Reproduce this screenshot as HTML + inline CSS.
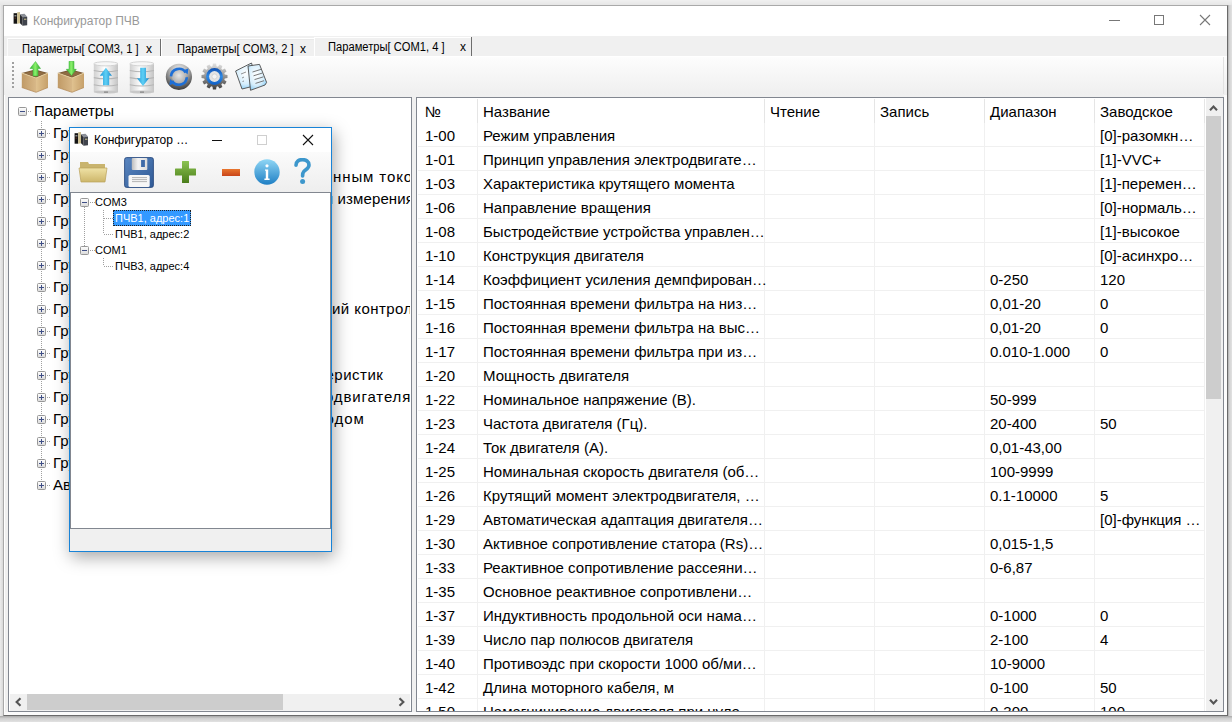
<!DOCTYPE html><html><head><meta charset="utf-8"><style>
*{box-sizing:border-box;margin:0;padding:0}
html,body{width:1232px;height:722px;overflow:hidden;background:#ececec;font-family:"Liberation Sans",sans-serif;color:#000}
.a{position:absolute}
.t{position:absolute;white-space:pre;line-height:1}
</style></head><body>
<div class="a" style="left:0px;top:0px;width:1232px;height:5px;background:linear-gradient(#f0f0f0,#e6e6e6)"></div>
<div class="a" style="left:3px;top:5px;width:1225px;height:711px;border:1px solid #a9a9a9;border-right-color:#6a6a6a;border-bottom-color:#6a6a6a;background:#f0f0f0"></div>
<div class="a" style="left:4px;top:57px;width:1px;height:658px;background:#fff"></div>
<div class="a" style="left:1224px;top:95px;width:3px;height:620px;background:#fcfcfc"></div>
<div class="a" style="left:4px;top:712px;width:1223px;height:3px;background:#fbfbfb"></div>
<div class="a" style="left:0px;top:716px;width:1232px;height:6px;background:linear-gradient(#a8a8a8,#cfcfcf 40%,#e2e2e2)"></div>
<div class="a" style="left:1228px;top:5px;width:4px;height:711px;background:linear-gradient(90deg,#b0b0b0,#d4d4d4 40%,#e2e2e2)"></div>
<div class="a" style="left:0px;top:5px;width:3px;height:711px;background:linear-gradient(90deg,#ececec,#d8d8d8)"></div>
<div class="a" style="left:4px;top:6px;width:1223px;height:30px;background:#fff"></div>
<svg class="a" style="left:13px;top:12px" width="15" height="14" viewBox="0 0 15 14">
<rect x=".6" y="1.2" width="3.6" height="10.5" fill="#141414"/><rect x="1.4" y="3" width="2" height="1.5" fill="#8a8a8a"/><rect x="1.6" y="5.6" width="1.2" height="1" fill="#7a3a2a"/>
<path d="M4.2 0.2 L7 0 L7 11.3 L4.2 11.7 Z" fill="#cdbf8f"/>
<path d="M7 2.2 L11.5 1.8 L14.2 4.8 L9.6 5.3 Z" fill="#8c9098"/>
<path d="M7 2.2 L9.6 5.3 L9.6 13.8 L7 11.3 Z" fill="#2c2e33"/>
<path d="M9.6 5.3 L14.2 4.8 L14.2 13.2 L9.6 13.8 Z" fill="#40444c"/><rect x="11" y="6.6" width="2.4" height="1.4" fill="#a9a27a"/></svg>
<div class="t" style="left:33px;top:15px;font-size:12px;color:#999;">Конфигуратор ПЧВ</div>
<div class="a" style="left:1109px;top:20px;width:11px;height:1px;background:#777"></div>
<div class="a" style="left:1154px;top:15px;width:10px;height:10px;border:1px solid #777"></div>
<svg class="a" style="left:1199px;top:14px" width="12" height="12" viewBox="0 0 12 12"><path d="M1 1L11 11M11 1L1 11" stroke="#777" stroke-width="1.1"/></svg>
<div class="a" style="left:4px;top:36px;width:1223px;height:21px;background:#f0f0f0"></div>
<div class="a" style="left:7px;top:38px;width:153px;height:18px;background:#f0f0f0;border-top:1px solid #fff"></div>
<div class="a" style="left:7px;top:39px;width:153px;height:1px;background:#e9e9e9"></div>
<div class="a" style="left:7px;top:38px;width:1px;height:18px;background:#fbfbfb"></div>
<div class="a" style="left:160px;top:39px;width:1px;height:17px;background:#6d6d6d"></div>
<div class="a" style="left:161px;top:38px;width:1px;height:18px;background:#fff"></div>
<div class="a" style="left:162px;top:38px;width:152px;height:18px;background:#f0f0f0;border-top:1px solid #fff"></div>
<div class="a" style="left:162px;top:39px;width:152px;height:1px;background:#e9e9e9"></div>
<div class="a" style="left:315px;top:37px;width:156px;height:19px;background:#f0f0f0;border-top:1px solid #fff"></div>
<div class="a" style="left:314px;top:37px;width:1px;height:19px;background:#fff"></div>
<div class="a" style="left:471px;top:37px;width:1px;height:19px;background:#6d6d6d"></div>
<div class="t" style="left:22px;top:43px;font-size:12px;color:#000;transform:scaleX(.93);transform-origin:0 0">Параметры[ COM3, 1 ]</div>
<div class="t" style="left:146px;top:43px;font-size:12px;color:#000;">x</div>
<div class="t" style="left:177px;top:43px;font-size:12px;color:#000;transform:scaleX(.93);transform-origin:0 0">Параметры[ COM3, 2 ]</div>
<div class="t" style="left:300px;top:43px;font-size:12px;color:#000;">x</div>
<div class="t" style="left:328px;top:41px;font-size:12px;color:#000;transform:scaleX(.93);transform-origin:0 0">Параметры[ COM1, 4 ]</div>
<div class="t" style="left:460px;top:41px;font-size:12px;color:#000;">x</div>
<div class="a" style="left:4px;top:56px;width:1223px;height:39px;border-top:1px solid #ffffff;background:linear-gradient(#fdfdfd,#f6f6f6 50%,#efefef)"></div>
<div class="a" style="left:1223px;top:57px;width:1px;height:37px;background:#e2e2e2"></div>
<div class="a" style="left:12px;top:62px;width:2px;height:2px;background:#a0a0a0"></div>
<div class="a" style="left:12px;top:66px;width:2px;height:2px;background:#a0a0a0"></div>
<div class="a" style="left:12px;top:70px;width:2px;height:2px;background:#a0a0a0"></div>
<div class="a" style="left:12px;top:74px;width:2px;height:2px;background:#a0a0a0"></div>
<div class="a" style="left:12px;top:78px;width:2px;height:2px;background:#a0a0a0"></div>
<div class="a" style="left:12px;top:82px;width:2px;height:2px;background:#a0a0a0"></div>
<div class="a" style="left:12px;top:86px;width:2px;height:2px;background:#a0a0a0"></div>
<svg class="a" style="left:0px;top:0px" width="1" height="1" viewBox="0 0 1 1"><defs><linearGradient id="bxl" x1="0" x2="1"><stop offset="0" stop-color="#c09a66"/><stop offset="1" stop-color="#d8b888"/></linearGradient>
<linearGradient id="bxr" x1="0" x2="1"><stop offset="0" stop-color="#e0c290"/><stop offset="1" stop-color="#c6a06a"/></linearGradient>
<linearGradient id="grn" x1="0" x2="1"><stop offset="0" stop-color="#2fb52f"/><stop offset=".5" stop-color="#8af06a"/><stop offset="1" stop-color="#2aa52a"/></linearGradient>
<linearGradient id="dbg" x1="0" x2="1"><stop offset="0" stop-color="#d0d0d0"/><stop offset=".45" stop-color="#ffffff"/><stop offset="1" stop-color="#c4c4c4"/></linearGradient>
<linearGradient id="blu" x1="0" x2="1"><stop offset="0" stop-color="#1e96d8"/><stop offset=".5" stop-color="#5fd0f5"/><stop offset="1" stop-color="#1a88cc"/></linearGradient>
<linearGradient id="exg" x1="0" y1="0" x2="0" y2="1"><stop offset="0" stop-color="#ffffff"/><stop offset="1" stop-color="#d9d9d9"/></linearGradient>
<radialGradient id="sph" cx=".4" cy=".35" r=".7"><stop offset="0" stop-color="#e8e8e8"/><stop offset=".6" stop-color="#8a8a8a"/><stop offset="1" stop-color="#3a3a3a"/></radialGradient>
</defs></svg>
<svg class="a" style="left:21px;top:61px" width="28" height="32" viewBox="0 0 28 32"><path d="M0.8 12 L14 8.5 L27 12 L15 17 Z" fill="#7a5a36"/>
<path d="M3 12.3 L14 9.8 L25 12.3 L15 15.8 Z" fill="#8f6c44"/>
<path d="M0.8 12 L15 17 L15 31.3 L0.8 26.5 Z" fill="url(#bxl)"/>
<path d="M15 17 L27 12 L27 26.5 L15 31.3 Z" fill="url(#bxr)"/>
<path d="M0.8 12 L15 17 L27 12" stroke="#e6cf9f" stroke-width=".9" fill="none"/>
<path d="M0.8 26.5 L15 31.3 L27 26.5" stroke="#b08552" stroke-width=".7" fill="none"/><path d="M12 15 L12 7.5 L9 7.5 L14.5 0.5 L19.5 7.5 L17 7.5 L17 15 Z" fill="url(#grn)" stroke="#34b034" stroke-width=".5"/></svg>
<svg class="a" style="left:57px;top:61px" width="28" height="32" viewBox="0 0 28 32"><path d="M0.8 12 L14 8.5 L27 12 L15 17 Z" fill="#7a5a36"/>
<path d="M3 12.3 L14 9.8 L25 12.3 L15 15.8 Z" fill="#8f6c44"/>
<path d="M0.8 12 L15 17 L15 31.3 L0.8 26.5 Z" fill="url(#bxl)"/>
<path d="M15 17 L27 12 L27 26.5 L15 31.3 Z" fill="url(#bxr)"/>
<path d="M0.8 12 L15 17 L27 12" stroke="#e6cf9f" stroke-width=".9" fill="none"/>
<path d="M0.8 26.5 L15 31.3 L27 26.5" stroke="#b08552" stroke-width=".7" fill="none"/><path d="M12 0.3 L17 0.3 L17 8.3 L19.3 8.3 L14.5 14.6 L9.3 8.3 L12 8.3 Z" fill="url(#grn)" stroke="#34b034" stroke-width=".5"/></svg>
<svg class="a" style="left:93px;top:61px" width="26" height="33" viewBox="0 0 26 33"><rect x=".8" y="2.6" width="24.2" height="28.8" fill="url(#dbg)"/>
<ellipse cx="12.9" cy="31" rx="12.1" ry="1.6" fill="#c8c8c8"/>
<ellipse cx="12.9" cy="2.8" rx="12.1" ry="2.1" fill="#f7f7f7" stroke="#cfcfcf" stroke-width=".9"/>
<path d="M.8 9.5 Q12.9 12 25 9.5" stroke="#b5b5b5" stroke-width="1.1" fill="none"/>
<path d="M.8 16.6 Q12.9 19 25 16.6" stroke="#b5b5b5" stroke-width="1.1" fill="none"/>
<path d="M.8 23.8 Q12.9 26.2 25 23.8" stroke="#b5b5b5" stroke-width="1.1" fill="none"/>
<rect x="11" y="30.6" width="4" height="1" fill="#777"/><path d="M10 24.3 L10 14.8 L6.8 14.8 L12.9 6.8 L19 14.8 L16.2 14.8 L16.2 24.3 Z" fill="url(#blu)"/></svg>
<svg class="a" style="left:129px;top:61px" width="26" height="33" viewBox="0 0 26 33"><rect x=".8" y="2.6" width="24.2" height="28.8" fill="url(#dbg)"/>
<ellipse cx="12.9" cy="31" rx="12.1" ry="1.6" fill="#c8c8c8"/>
<ellipse cx="12.9" cy="2.8" rx="12.1" ry="2.1" fill="#f7f7f7" stroke="#cfcfcf" stroke-width=".9"/>
<path d="M.8 9.5 Q12.9 12 25 9.5" stroke="#b5b5b5" stroke-width="1.1" fill="none"/>
<path d="M.8 16.6 Q12.9 19 25 16.6" stroke="#b5b5b5" stroke-width="1.1" fill="none"/>
<path d="M.8 23.8 Q12.9 26.2 25 23.8" stroke="#b5b5b5" stroke-width="1.1" fill="none"/>
<rect x="11" y="30.6" width="4" height="1" fill="#777"/><path d="M11.2 6.8 L17 6.8 L17 17.3 L20 17.3 L14 25 L8 17.3 L11.2 17.3 Z" fill="url(#blu)"/></svg>
<svg class="a" style="left:165px;top:63px" width="28" height="28" viewBox="0 0 28 28"><defs><radialGradient id="sph2" cx=".5" cy=".25" r=".8"><stop offset="0" stop-color="#f4f4f4"/><stop offset=".45" stop-color="#a9a9a9"/><stop offset=".8" stop-color="#585858"/><stop offset="1" stop-color="#2e2e2e"/></radialGradient>
<radialGradient id="sphc" cx=".5" cy=".4" r=".6"><stop offset="0" stop-color="#e6e6e6"/><stop offset="1" stop-color="#a9a9a9"/></radialGradient></defs>
<circle cx="13.9" cy="13.8" r="13.1" fill="url(#sph2)"/>
<circle cx="13.9" cy="13.8" r="7" fill="url(#sphc)"/>
<path d="M6 13.4 A7.9 7.9 0 0 1 20.6 9.6" stroke="#1e6fd6" stroke-width="2.6" fill="none"/>
<path d="M18.2 7.3 L23.4 5.4 L22.6 11.6 Z" fill="#1e6fd6"/>
<path d="M21.8 14.2 A7.9 7.9 0 0 1 7.2 18" stroke="#1e6fd6" stroke-width="2.6" fill="none"/>
<path d="M9.6 20.3 L4.4 22.2 L5.2 16 Z" fill="#1e6fd6"/></svg>
<svg class="a" style="left:201px;top:63px" width="28" height="28" viewBox="0 0 28 28"><defs><linearGradient id="gg" x1="0" y1="0" x2="0" y2="1"><stop offset="0" stop-color="#e2e2e2"/><stop offset=".45" stop-color="#9a9a9a"/><stop offset="1" stop-color="#3e3e3e"/></linearGradient>
<linearGradient id="gr" x1="0" y1="0" x2="0" y2="1"><stop offset="0" stop-color="#0f4fb0"/><stop offset=".5" stop-color="#2f8ae6"/><stop offset="1" stop-color="#0f5ec4"/></linearGradient></defs>
<path d="M11.52 3.29 L11.90 0.50 L15.10 0.50 L15.48 3.29 L16.89 3.67 L18.62 1.44 L21.38 3.04 L20.32 5.65 L21.35 6.68 L23.96 5.62 L25.56 8.38 L23.33 10.11 L23.71 11.52 L26.50 11.90 L26.50 15.10 L23.71 15.48 L23.33 16.89 L25.56 18.62 L23.96 21.38 L21.35 20.32 L20.32 21.35 L21.38 23.96 L18.62 25.56 L16.89 23.33 L15.48 23.71 L15.10 26.50 L11.90 26.50 L11.52 23.71 L10.11 23.33 L8.38 25.56 L5.62 23.96 L6.68 21.35 L5.65 20.32 L3.04 21.38 L1.44 18.62 L3.67 16.89 L3.29 15.48 L0.50 15.10 L0.50 11.90 L3.29 11.52 L3.67 10.11 L1.44 8.38 L3.04 5.62 L5.65 6.68 L6.68 5.65 L5.62 3.04 L8.38 1.44 L10.11 3.67Z" fill="url(#gg)"/>
<circle cx="13.5" cy="13.5" r="8.4" fill="url(#gr)"/><circle cx="13.5" cy="13.5" r="5.4" fill="#e4e4e4"/><circle cx="13.5" cy="13.5" r="2.6" fill="#f4f4f4" stroke="#cfcfcf" stroke-width=".8"/></svg>
<svg class="a" style="left:235px;top:62px" width="33" height="30" viewBox="0 0 33 30"><defs><radialGradient id="pg" cx=".45" cy=".4" r=".75"><stop offset="0" stop-color="#ffffff"/><stop offset=".55" stop-color="#d6eefc"/><stop offset="1" stop-color="#68bdf0"/></radialGradient></defs>
<path d="M0.6 9 L16.5 1 L23 23 L7 27 Z" fill="url(#pg)" stroke="#4c4c4c" stroke-width=".9"/>
<path d="M13 4 L24.5 2.4 L31.6 20.4 L30 23 L15.5 28.3 Z" fill="url(#pg)" stroke="#4c4c4c" stroke-width=".9"/>
<path d="M17.5 10 L26.5 7.2 M18.5 13.8 L27.5 11 M19.5 17.6 L28.5 14.8 M20.5 21.4 L29 18.7" stroke="#6a6a6a" stroke-width=".9"/>
<path d="M6 12 L11 10 M7 16 L9 15 M7.5 19.5 L9 19" stroke="#777" stroke-width=".8"/></svg>
<div class="a" style="left:8px;top:97px;width:404px;height:615px;border:1px solid #828790;background:#fff"></div>
<div class="a" style="left:9px;top:98px;width:401px;height:596px;overflow:hidden;">
<svg class="a" style="left:9px;top:9px" width="9" height="9" viewBox="0 0 9 9"><rect x=".5" y=".5" width="8" height="8" rx="1" fill="url(#exg)" stroke="#979797"/><rect x="2" y="4" width="5" height="1" fill="#3f4f86"/></svg>
<div class="a" style="left:19px;top:13px;width:4px;height:1px;background:repeating-linear-gradient(90deg,#a0a0a0 0 1px,transparent 1px 2px)"></div>
<div class="t" style="left:25px;top:5px;font-size:15px;color:#000;">Параметры</div>
<div class="a" style="left:32px;top:23px;width:1px;height:365px;background:repeating-linear-gradient(#a0a0a0 0 1px,transparent 1px 2px)"></div>
<svg class="a" style="left:28px;top:31px" width="9" height="9" viewBox="0 0 9 9"><rect x=".5" y=".5" width="8" height="8" rx="1" fill="url(#exg)" stroke="#979797"/><rect x="2" y="4" width="5" height="1" fill="#3f4f86"/><rect x="4" y="2" width="1" height="5" fill="#3f4f86"/></svg>
<div class="a" style="left:38px;top:35px;width:4px;height:1px;background:repeating-linear-gradient(90deg,#a0a0a0 0 1px,transparent 1px 2px)"></div>
<div class="t" style="left:44px;top:27px;font-size:15px;color:#000;">Группа</div>
<svg class="a" style="left:28px;top:53px" width="9" height="9" viewBox="0 0 9 9"><rect x=".5" y=".5" width="8" height="8" rx="1" fill="url(#exg)" stroke="#979797"/><rect x="2" y="4" width="5" height="1" fill="#3f4f86"/><rect x="4" y="2" width="1" height="5" fill="#3f4f86"/></svg>
<div class="a" style="left:38px;top:57px;width:4px;height:1px;background:repeating-linear-gradient(90deg,#a0a0a0 0 1px,transparent 1px 2px)"></div>
<div class="t" style="left:44px;top:49px;font-size:15px;color:#000;">Группа</div>
<svg class="a" style="left:28px;top:75px" width="9" height="9" viewBox="0 0 9 9"><rect x=".5" y=".5" width="8" height="8" rx="1" fill="url(#exg)" stroke="#979797"/><rect x="2" y="4" width="5" height="1" fill="#3f4f86"/><rect x="4" y="2" width="1" height="5" fill="#3f4f86"/></svg>
<div class="a" style="left:38px;top:79px;width:4px;height:1px;background:repeating-linear-gradient(90deg,#a0a0a0 0 1px,transparent 1px 2px)"></div>
<div class="t" style="left:44px;top:71px;font-size:15px;color:#000;">Группа</div>
<svg class="a" style="left:28px;top:97px" width="9" height="9" viewBox="0 0 9 9"><rect x=".5" y=".5" width="8" height="8" rx="1" fill="url(#exg)" stroke="#979797"/><rect x="2" y="4" width="5" height="1" fill="#3f4f86"/><rect x="4" y="2" width="1" height="5" fill="#3f4f86"/></svg>
<div class="a" style="left:38px;top:101px;width:4px;height:1px;background:repeating-linear-gradient(90deg,#a0a0a0 0 1px,transparent 1px 2px)"></div>
<div class="t" style="left:44px;top:93px;font-size:15px;color:#000;">Группа</div>
<svg class="a" style="left:28px;top:119px" width="9" height="9" viewBox="0 0 9 9"><rect x=".5" y=".5" width="8" height="8" rx="1" fill="url(#exg)" stroke="#979797"/><rect x="2" y="4" width="5" height="1" fill="#3f4f86"/><rect x="4" y="2" width="1" height="5" fill="#3f4f86"/></svg>
<div class="a" style="left:38px;top:123px;width:4px;height:1px;background:repeating-linear-gradient(90deg,#a0a0a0 0 1px,transparent 1px 2px)"></div>
<div class="t" style="left:44px;top:115px;font-size:15px;color:#000;">Группа</div>
<svg class="a" style="left:28px;top:141px" width="9" height="9" viewBox="0 0 9 9"><rect x=".5" y=".5" width="8" height="8" rx="1" fill="url(#exg)" stroke="#979797"/><rect x="2" y="4" width="5" height="1" fill="#3f4f86"/><rect x="4" y="2" width="1" height="5" fill="#3f4f86"/></svg>
<div class="a" style="left:38px;top:145px;width:4px;height:1px;background:repeating-linear-gradient(90deg,#a0a0a0 0 1px,transparent 1px 2px)"></div>
<div class="t" style="left:44px;top:137px;font-size:15px;color:#000;">Группа</div>
<svg class="a" style="left:28px;top:163px" width="9" height="9" viewBox="0 0 9 9"><rect x=".5" y=".5" width="8" height="8" rx="1" fill="url(#exg)" stroke="#979797"/><rect x="2" y="4" width="5" height="1" fill="#3f4f86"/><rect x="4" y="2" width="1" height="5" fill="#3f4f86"/></svg>
<div class="a" style="left:38px;top:167px;width:4px;height:1px;background:repeating-linear-gradient(90deg,#a0a0a0 0 1px,transparent 1px 2px)"></div>
<div class="t" style="left:44px;top:159px;font-size:15px;color:#000;">Группа</div>
<svg class="a" style="left:28px;top:185px" width="9" height="9" viewBox="0 0 9 9"><rect x=".5" y=".5" width="8" height="8" rx="1" fill="url(#exg)" stroke="#979797"/><rect x="2" y="4" width="5" height="1" fill="#3f4f86"/><rect x="4" y="2" width="1" height="5" fill="#3f4f86"/></svg>
<div class="a" style="left:38px;top:189px;width:4px;height:1px;background:repeating-linear-gradient(90deg,#a0a0a0 0 1px,transparent 1px 2px)"></div>
<div class="t" style="left:44px;top:181px;font-size:15px;color:#000;">Группа</div>
<svg class="a" style="left:28px;top:207px" width="9" height="9" viewBox="0 0 9 9"><rect x=".5" y=".5" width="8" height="8" rx="1" fill="url(#exg)" stroke="#979797"/><rect x="2" y="4" width="5" height="1" fill="#3f4f86"/><rect x="4" y="2" width="1" height="5" fill="#3f4f86"/></svg>
<div class="a" style="left:38px;top:211px;width:4px;height:1px;background:repeating-linear-gradient(90deg,#a0a0a0 0 1px,transparent 1px 2px)"></div>
<div class="t" style="left:44px;top:203px;font-size:15px;color:#000;">Группа</div>
<svg class="a" style="left:28px;top:229px" width="9" height="9" viewBox="0 0 9 9"><rect x=".5" y=".5" width="8" height="8" rx="1" fill="url(#exg)" stroke="#979797"/><rect x="2" y="4" width="5" height="1" fill="#3f4f86"/><rect x="4" y="2" width="1" height="5" fill="#3f4f86"/></svg>
<div class="a" style="left:38px;top:233px;width:4px;height:1px;background:repeating-linear-gradient(90deg,#a0a0a0 0 1px,transparent 1px 2px)"></div>
<div class="t" style="left:44px;top:225px;font-size:15px;color:#000;">Группа</div>
<svg class="a" style="left:28px;top:251px" width="9" height="9" viewBox="0 0 9 9"><rect x=".5" y=".5" width="8" height="8" rx="1" fill="url(#exg)" stroke="#979797"/><rect x="2" y="4" width="5" height="1" fill="#3f4f86"/><rect x="4" y="2" width="1" height="5" fill="#3f4f86"/></svg>
<div class="a" style="left:38px;top:255px;width:4px;height:1px;background:repeating-linear-gradient(90deg,#a0a0a0 0 1px,transparent 1px 2px)"></div>
<div class="t" style="left:44px;top:247px;font-size:15px;color:#000;">Группа</div>
<svg class="a" style="left:28px;top:273px" width="9" height="9" viewBox="0 0 9 9"><rect x=".5" y=".5" width="8" height="8" rx="1" fill="url(#exg)" stroke="#979797"/><rect x="2" y="4" width="5" height="1" fill="#3f4f86"/><rect x="4" y="2" width="1" height="5" fill="#3f4f86"/></svg>
<div class="a" style="left:38px;top:277px;width:4px;height:1px;background:repeating-linear-gradient(90deg,#a0a0a0 0 1px,transparent 1px 2px)"></div>
<div class="t" style="left:44px;top:269px;font-size:15px;color:#000;">Группа</div>
<svg class="a" style="left:28px;top:295px" width="9" height="9" viewBox="0 0 9 9"><rect x=".5" y=".5" width="8" height="8" rx="1" fill="url(#exg)" stroke="#979797"/><rect x="2" y="4" width="5" height="1" fill="#3f4f86"/><rect x="4" y="2" width="1" height="5" fill="#3f4f86"/></svg>
<div class="a" style="left:38px;top:299px;width:4px;height:1px;background:repeating-linear-gradient(90deg,#a0a0a0 0 1px,transparent 1px 2px)"></div>
<div class="t" style="left:44px;top:291px;font-size:15px;color:#000;">Группа</div>
<svg class="a" style="left:28px;top:317px" width="9" height="9" viewBox="0 0 9 9"><rect x=".5" y=".5" width="8" height="8" rx="1" fill="url(#exg)" stroke="#979797"/><rect x="2" y="4" width="5" height="1" fill="#3f4f86"/><rect x="4" y="2" width="1" height="5" fill="#3f4f86"/></svg>
<div class="a" style="left:38px;top:321px;width:4px;height:1px;background:repeating-linear-gradient(90deg,#a0a0a0 0 1px,transparent 1px 2px)"></div>
<div class="t" style="left:44px;top:313px;font-size:15px;color:#000;">Группа</div>
<svg class="a" style="left:28px;top:339px" width="9" height="9" viewBox="0 0 9 9"><rect x=".5" y=".5" width="8" height="8" rx="1" fill="url(#exg)" stroke="#979797"/><rect x="2" y="4" width="5" height="1" fill="#3f4f86"/><rect x="4" y="2" width="1" height="5" fill="#3f4f86"/></svg>
<div class="a" style="left:38px;top:343px;width:4px;height:1px;background:repeating-linear-gradient(90deg,#a0a0a0 0 1px,transparent 1px 2px)"></div>
<div class="t" style="left:44px;top:335px;font-size:15px;color:#000;">Группа</div>
<svg class="a" style="left:28px;top:361px" width="9" height="9" viewBox="0 0 9 9"><rect x=".5" y=".5" width="8" height="8" rx="1" fill="url(#exg)" stroke="#979797"/><rect x="2" y="4" width="5" height="1" fill="#3f4f86"/><rect x="4" y="2" width="1" height="5" fill="#3f4f86"/></svg>
<div class="a" style="left:38px;top:365px;width:4px;height:1px;background:repeating-linear-gradient(90deg,#a0a0a0 0 1px,transparent 1px 2px)"></div>
<div class="t" style="left:44px;top:357px;font-size:15px;color:#000;">Группа</div>
<svg class="a" style="left:28px;top:383px" width="9" height="9" viewBox="0 0 9 9"><rect x=".5" y=".5" width="8" height="8" rx="1" fill="url(#exg)" stroke="#979797"/><rect x="2" y="4" width="5" height="1" fill="#3f4f86"/><rect x="4" y="2" width="1" height="5" fill="#3f4f86"/></svg>
<div class="a" style="left:38px;top:387px;width:4px;height:1px;background:repeating-linear-gradient(90deg,#a0a0a0 0 1px,transparent 1px 2px)"></div>
<div class="t" style="left:44px;top:379px;font-size:15px;color:#000;">Автоматика</div>
<div class="t" style="left:315px;top:71px;font-size:15px;color:#000;letter-spacing:0.9px">янным током</div>
<div class="t" style="left:316px;top:93px;font-size:15px;color:#000;letter-spacing:0.12px">я измерения</div>
<div class="t" style="left:316px;top:203px;font-size:15px;color:#000;letter-spacing:0.45px">кий контроль</div>
<div class="t" style="left:316.5px;top:269px;font-size:15px;color:#000;letter-spacing:0.5px">еристик</div>
<div class="t" style="left:316px;top:291px;font-size:15px;color:#000;letter-spacing:0.85px">одвигателя</div>
<div class="t" style="left:316.5px;top:313px;font-size:15px;color:#000;letter-spacing:0.95px">одом</div>
</div>
<div class="a" style="left:10px;top:694px;width:400px;height:17px;background:#f0f0f0"></div>
<div class="a" style="left:27px;top:694px;width:256px;height:16px;background:#cdcdcd"></div>
<svg class="a" style="left:14px;top:697px" width="9" height="10" viewBox="0 0 9 10"><path d="M6.5 1.2 L2.6 5 L6.5 8.8" stroke="#555" stroke-width="2.1" fill="none"/></svg>
<svg class="a" style="left:398px;top:697px" width="9" height="10" viewBox="0 0 9 10"><path d="M1.5 1.2 L5.4 5 L1.5 8.8" stroke="#555" stroke-width="2.1" fill="none"/></svg>
<div class="a" style="left:412px;top:97px;width:4px;height:615px;background:#f0f0f0"></div>
<div class="a" style="left:416px;top:97px;width:808px;height:615px;border:1px solid #828790;background:#fff"></div>
<div class="a" style="left:417px;top:98px;width:789px;height:613px;overflow:hidden;">
<div class="a" style="left:60px;top:1px;width:1px;height:24px;background:#e5e5e5"></div>
<div class="a" style="left:347px;top:1px;width:1px;height:24px;background:#e5e5e5"></div>
<div class="a" style="left:457px;top:1px;width:1px;height:24px;background:#e5e5e5"></div>
<div class="a" style="left:567px;top:1px;width:1px;height:24px;background:#e5e5e5"></div>
<div class="a" style="left:677px;top:1px;width:1px;height:24px;background:#e5e5e5"></div>
<div class="a" style="left:787px;top:1px;width:1px;height:24px;background:#e5e5e5"></div>
<div class="t" style="left:8px;top:6px;font-size:15px;color:#000;">№</div>
<div class="t" style="left:66px;top:6px;font-size:15px;color:#000;">Название</div>
<div class="t" style="left:353px;top:6px;font-size:15px;color:#000;">Чтение</div>
<div class="t" style="left:463px;top:6px;font-size:15px;color:#000;">Запись</div>
<div class="t" style="left:573px;top:6px;font-size:15px;color:#000;">Диапазон</div>
<div class="t" style="left:683px;top:6px;font-size:15px;color:#000;">Заводское</div>
<div class="a" style="left:1px;top:48px;width:787px;height:1px;background:#f0f0f0"></div>
<div class="a" style="left:1px;top:72px;width:787px;height:1px;background:#f0f0f0"></div>
<div class="a" style="left:1px;top:96px;width:787px;height:1px;background:#f0f0f0"></div>
<div class="a" style="left:1px;top:120px;width:787px;height:1px;background:#f0f0f0"></div>
<div class="a" style="left:1px;top:144px;width:787px;height:1px;background:#f0f0f0"></div>
<div class="a" style="left:1px;top:168px;width:787px;height:1px;background:#f0f0f0"></div>
<div class="a" style="left:1px;top:192px;width:787px;height:1px;background:#f0f0f0"></div>
<div class="a" style="left:1px;top:216px;width:787px;height:1px;background:#f0f0f0"></div>
<div class="a" style="left:1px;top:240px;width:787px;height:1px;background:#f0f0f0"></div>
<div class="a" style="left:1px;top:264px;width:787px;height:1px;background:#f0f0f0"></div>
<div class="a" style="left:1px;top:288px;width:787px;height:1px;background:#f0f0f0"></div>
<div class="a" style="left:1px;top:312px;width:787px;height:1px;background:#f0f0f0"></div>
<div class="a" style="left:1px;top:336px;width:787px;height:1px;background:#f0f0f0"></div>
<div class="a" style="left:1px;top:360px;width:787px;height:1px;background:#f0f0f0"></div>
<div class="a" style="left:1px;top:384px;width:787px;height:1px;background:#f0f0f0"></div>
<div class="a" style="left:1px;top:408px;width:787px;height:1px;background:#f0f0f0"></div>
<div class="a" style="left:1px;top:432px;width:787px;height:1px;background:#f0f0f0"></div>
<div class="a" style="left:1px;top:456px;width:787px;height:1px;background:#f0f0f0"></div>
<div class="a" style="left:1px;top:480px;width:787px;height:1px;background:#f0f0f0"></div>
<div class="a" style="left:1px;top:504px;width:787px;height:1px;background:#f0f0f0"></div>
<div class="a" style="left:1px;top:528px;width:787px;height:1px;background:#f0f0f0"></div>
<div class="a" style="left:1px;top:552px;width:787px;height:1px;background:#f0f0f0"></div>
<div class="a" style="left:1px;top:576px;width:787px;height:1px;background:#f0f0f0"></div>
<div class="a" style="left:1px;top:600px;width:787px;height:1px;background:#f0f0f0"></div>
<div class="a" style="left:1px;top:624px;width:787px;height:1px;background:#f0f0f0"></div>
<div class="a" style="left:1px;top:648px;width:787px;height:1px;background:#f0f0f0"></div>
<div class="a" style="left:60px;top:25px;width:1px;height:590px;background:#f0f0f0"></div>
<div class="a" style="left:347px;top:25px;width:1px;height:590px;background:#f0f0f0"></div>
<div class="a" style="left:457px;top:25px;width:1px;height:590px;background:#f0f0f0"></div>
<div class="a" style="left:567px;top:25px;width:1px;height:590px;background:#f0f0f0"></div>
<div class="a" style="left:677px;top:25px;width:1px;height:590px;background:#f0f0f0"></div>
<div class="a" style="left:787px;top:25px;width:1px;height:590px;background:#f0f0f0"></div>
<div class="t" style="left:8px;top:30px;font-size:15px;color:#000;">1-00</div>
<div class="t" style="left:66px;top:30px;font-size:15px;color:#000;">Режим управления</div>
<div class="t" style="left:683px;top:30px;font-size:15px;color:#000;">[0]-разомкн…</div>
<div class="t" style="left:8px;top:54px;font-size:15px;color:#000;">1-01</div>
<div class="t" style="left:66px;top:54px;font-size:15px;color:#000;">Принцип управления электродвигате…</div>
<div class="t" style="left:683px;top:54px;font-size:15px;color:#000;">[1]-VVC+</div>
<div class="t" style="left:8px;top:78px;font-size:15px;color:#000;">1-03</div>
<div class="t" style="left:66px;top:78px;font-size:15px;color:#000;">Характеристика крутящего момента</div>
<div class="t" style="left:683px;top:78px;font-size:15px;color:#000;">[1]-перемен…</div>
<div class="t" style="left:8px;top:102px;font-size:15px;color:#000;">1-06</div>
<div class="t" style="left:66px;top:102px;font-size:15px;color:#000;">Направление вращения</div>
<div class="t" style="left:683px;top:102px;font-size:15px;color:#000;">[0]-нормаль…</div>
<div class="t" style="left:8px;top:126px;font-size:15px;color:#000;">1-08</div>
<div class="t" style="left:66px;top:126px;font-size:15px;color:#000;">Быстродействие устройства управлен…</div>
<div class="t" style="left:683px;top:126px;font-size:15px;color:#000;">[1]-высокое</div>
<div class="t" style="left:8px;top:150px;font-size:15px;color:#000;">1-10</div>
<div class="t" style="left:66px;top:150px;font-size:15px;color:#000;">Конструкция двигателя</div>
<div class="t" style="left:683px;top:150px;font-size:15px;color:#000;">[0]-асинхро…</div>
<div class="t" style="left:8px;top:174px;font-size:15px;color:#000;">1-14</div>
<div class="t" style="left:66px;top:174px;font-size:15px;color:#000;">Коэффициент усиления демпфирован…</div>
<div class="t" style="left:573px;top:174px;font-size:15px;color:#000;">0-250</div>
<div class="t" style="left:683px;top:174px;font-size:15px;color:#000;">120</div>
<div class="t" style="left:8px;top:198px;font-size:15px;color:#000;">1-15</div>
<div class="t" style="left:66px;top:198px;font-size:15px;color:#000;">Постоянная времени фильтра на низ…</div>
<div class="t" style="left:573px;top:198px;font-size:15px;color:#000;">0,01-20</div>
<div class="t" style="left:683px;top:198px;font-size:15px;color:#000;">0</div>
<div class="t" style="left:8px;top:222px;font-size:15px;color:#000;">1-16</div>
<div class="t" style="left:66px;top:222px;font-size:15px;color:#000;">Постоянная времени фильтра на выс…</div>
<div class="t" style="left:573px;top:222px;font-size:15px;color:#000;">0,01-20</div>
<div class="t" style="left:683px;top:222px;font-size:15px;color:#000;">0</div>
<div class="t" style="left:8px;top:246px;font-size:15px;color:#000;">1-17</div>
<div class="t" style="left:66px;top:246px;font-size:15px;color:#000;">Постоянная времени фильтра при из…</div>
<div class="t" style="left:573px;top:246px;font-size:15px;color:#000;">0.010-1.000</div>
<div class="t" style="left:683px;top:246px;font-size:15px;color:#000;">0</div>
<div class="t" style="left:8px;top:270px;font-size:15px;color:#000;">1-20</div>
<div class="t" style="left:66px;top:270px;font-size:15px;color:#000;">Мощность двигателя</div>
<div class="t" style="left:8px;top:294px;font-size:15px;color:#000;">1-22</div>
<div class="t" style="left:66px;top:294px;font-size:15px;color:#000;">Номинальное напряжение (В).</div>
<div class="t" style="left:573px;top:294px;font-size:15px;color:#000;">50-999</div>
<div class="t" style="left:8px;top:318px;font-size:15px;color:#000;">1-23</div>
<div class="t" style="left:66px;top:318px;font-size:15px;color:#000;">Частота двигателя (Гц).</div>
<div class="t" style="left:573px;top:318px;font-size:15px;color:#000;">20-400</div>
<div class="t" style="left:683px;top:318px;font-size:15px;color:#000;">50</div>
<div class="t" style="left:8px;top:342px;font-size:15px;color:#000;">1-24</div>
<div class="t" style="left:66px;top:342px;font-size:15px;color:#000;">Ток двигателя (А).</div>
<div class="t" style="left:573px;top:342px;font-size:15px;color:#000;">0,01-43,00</div>
<div class="t" style="left:8px;top:366px;font-size:15px;color:#000;">1-25</div>
<div class="t" style="left:66px;top:366px;font-size:15px;color:#000;">Номинальная скорость двигателя (об…</div>
<div class="t" style="left:573px;top:366px;font-size:15px;color:#000;">100-9999</div>
<div class="t" style="left:8px;top:390px;font-size:15px;color:#000;">1-26</div>
<div class="t" style="left:66px;top:390px;font-size:15px;color:#000;">Крутящий момент электродвигателя, …</div>
<div class="t" style="left:573px;top:390px;font-size:15px;color:#000;">0.1-10000</div>
<div class="t" style="left:683px;top:390px;font-size:15px;color:#000;">5</div>
<div class="t" style="left:8px;top:414px;font-size:15px;color:#000;">1-29</div>
<div class="t" style="left:66px;top:414px;font-size:15px;color:#000;">Автоматическая адаптация двигателя…</div>
<div class="t" style="left:683px;top:414px;font-size:15px;color:#000;">[0]-функция …</div>
<div class="t" style="left:8px;top:438px;font-size:15px;color:#000;">1-30</div>
<div class="t" style="left:66px;top:438px;font-size:15px;color:#000;">Активное сопротивление статора (Rs)…</div>
<div class="t" style="left:573px;top:438px;font-size:15px;color:#000;">0,015-1,5</div>
<div class="t" style="left:8px;top:462px;font-size:15px;color:#000;">1-33</div>
<div class="t" style="left:66px;top:462px;font-size:15px;color:#000;">Реактивное сопротивление рассеяни…</div>
<div class="t" style="left:573px;top:462px;font-size:15px;color:#000;">0-6,87</div>
<div class="t" style="left:8px;top:486px;font-size:15px;color:#000;">1-35</div>
<div class="t" style="left:66px;top:486px;font-size:15px;color:#000;">Основное реактивное сопротивлени…</div>
<div class="t" style="left:8px;top:510px;font-size:15px;color:#000;">1-37</div>
<div class="t" style="left:66px;top:510px;font-size:15px;color:#000;">Индуктивность продольной оси нама…</div>
<div class="t" style="left:573px;top:510px;font-size:15px;color:#000;">0-1000</div>
<div class="t" style="left:683px;top:510px;font-size:15px;color:#000;">0</div>
<div class="t" style="left:8px;top:534px;font-size:15px;color:#000;">1-39</div>
<div class="t" style="left:66px;top:534px;font-size:15px;color:#000;">Число пар полюсов двигателя</div>
<div class="t" style="left:573px;top:534px;font-size:15px;color:#000;">2-100</div>
<div class="t" style="left:683px;top:534px;font-size:15px;color:#000;">4</div>
<div class="t" style="left:8px;top:558px;font-size:15px;color:#000;">1-40</div>
<div class="t" style="left:66px;top:558px;font-size:15px;color:#000;">Противоэдс при скорости 1000 об/ми…</div>
<div class="t" style="left:573px;top:558px;font-size:15px;color:#000;">10-9000</div>
<div class="t" style="left:8px;top:582px;font-size:15px;color:#000;">1-42</div>
<div class="t" style="left:66px;top:582px;font-size:15px;color:#000;">Длина моторного кабеля, м</div>
<div class="t" style="left:573px;top:582px;font-size:15px;color:#000;">0-100</div>
<div class="t" style="left:683px;top:582px;font-size:15px;color:#000;">50</div>
<div class="t" style="left:8px;top:606px;font-size:15px;color:#000;">1-50</div>
<div class="t" style="left:66px;top:606px;font-size:15px;color:#000;">Намагничивание двигателя при нуле…</div>
<div class="t" style="left:573px;top:606px;font-size:15px;color:#000;">0-300</div>
<div class="t" style="left:683px;top:606px;font-size:15px;color:#000;">100</div>
</div>
<div class="a" style="left:1206px;top:98px;width:17px;height:613px;background:#f0f0f0"></div>
<div class="a" style="left:1206px;top:116px;width:15px;height:283px;background:#cdcdcd"></div>
<svg class="a" style="left:1209px;top:104px" width="9" height="8" viewBox="0 0 9 8"><path d="M1 6.3 L4.5 2.6 L8 6.3" stroke="#555" stroke-width="2.1" fill="none"/></svg>
<svg class="a" style="left:1209px;top:698px" width="9" height="8" viewBox="0 0 9 8"><path d="M1 1.7 L4.5 5.4 L8 1.7" stroke="#555" stroke-width="2.1" fill="none"/></svg>
<div class="a" style="left:69px;top:127px;width:263px;height:425px;border:1px solid #1883d7;background:#f0f0f0;box-shadow:2px 5px 16px rgba(0,0,0,.35)"></div>
<div class="a" style="left:70px;top:128px;width:261px;height:24px;background:#fff"></div>
<svg class="a" style="left:74px;top:132px" width="14" height="14" viewBox="0 0 14 14"><rect x=".6" y="1.2" width="3.6" height="10.5" fill="#141414"/><rect x="1.4" y="3" width="2" height="1.5" fill="#8a8a8a"/><rect x="1.6" y="5.6" width="1.2" height="1" fill="#7a3a2a"/>
<path d="M4.2 0.2 L7 0 L7 11.3 L4.2 11.7 Z" fill="#cdbf8f"/>
<path d="M7 2.2 L11.5 1.8 L14.2 4.8 L9.6 5.3 Z" fill="#8c9098"/>
<path d="M7 2.2 L9.6 5.3 L9.6 13.8 L7 11.3 Z" fill="#2c2e33"/>
<path d="M9.6 5.3 L14.2 4.8 L14.2 13.2 L9.6 13.8 Z" fill="#40444c"/><rect x="11" y="6.6" width="2.4" height="1.4" fill="#a9a27a"/></svg>
<div class="t" style="left:94px;top:134px;font-size:12px;color:#000;">Конфигуратор …</div>
<div class="a" style="left:212px;top:140px;width:10px;height:1px;background:#111"></div>
<div class="a" style="left:257px;top:135px;width:10px;height:10px;border:1px solid #cfcfcf"></div>
<svg class="a" style="left:302px;top:134px" width="12" height="12" viewBox="0 0 12 12"><path d="M1 1L11 11M11 1L1 11" stroke="#111" stroke-width="1.1"/></svg>
<div class="a" style="left:70px;top:152px;width:261px;height:40px;background:linear-gradient(#fbfbfb,#f3f3f3 60%,#eeeeee)"></div>
<svg class="a" style="left:78px;top:160px" width="31" height="24" viewBox="0 0 31 24"><defs><linearGradient id="fld" x1="0" y1="0" x2="0" y2="1"><stop offset="0" stop-color="#efe2a6"/><stop offset="1" stop-color="#cdb66a"/></linearGradient></defs>
<path d="M2 4 L2 2 L10 2 L11 4 L27 4 L27 8 L2 8 Z" fill="#c9b46e"/>
<path d="M1 8 L29 8 L27 22 L3 22 Z" fill="url(#fld)" stroke="#b9a05a" stroke-width=".7"/></svg>
<svg class="a" style="left:124px;top:157px" width="30" height="31" viewBox="0 0 30 31"><defs><linearGradient id="flp" x1="0" y1="0" x2="1" y2="1"><stop offset="0" stop-color="#5a86c0"/><stop offset="1" stop-color="#2f5a96"/></linearGradient>
<linearGradient id="shu" x1="0" x2="1"><stop offset="0" stop-color="#bdbdbd"/><stop offset=".4" stop-color="#f4f4f4"/><stop offset="1" stop-color="#dcdcdc"/></linearGradient></defs>
<rect x=".6" y=".6" width="28.8" height="29.8" rx="2" fill="url(#flp)" stroke="#2a4c80" stroke-width=".9"/>
<rect x="7.8" y="1" width="15.5" height="12" rx="1" fill="url(#shu)"/><rect x="17.1" y="3" width="3.8" height="7" fill="#3e6aa8"/>
<rect x="4.5" y="18" width="21.2" height="12" rx="1.5" fill="#f7f7f7"/><path d="M8 20.6 H23 M8 22.6 H23 M8 24.6 H23" stroke="#9a9a9a" stroke-width=".7"/></svg>
<svg class="a" style="left:174px;top:161px" width="23" height="22" viewBox="0 0 23 22"><defs><linearGradient id="plg" x1="0" y1="0" x2="0" y2="1"><stop offset="0" stop-color="#8cc352"/><stop offset="1" stop-color="#4a7d1a"/></linearGradient></defs><path d="M8 0.5 Q8 0 8.5 0 H14.5 Q15 0 15 0.5 V7.5 H21.5 Q22 7.5 22 8 V14 Q22 14.5 21.5 14.5 H15 V21.5 Q15 22 14.5 22 H8.5 Q8 22 8 21.5 V14.5 H1.5 Q1 14.5 1 14 V8 Q1 7.5 1.5 7.5 H8 Z" fill="url(#plg)"/></svg>
<div class="a" style="left:222px;top:169px;width:18px;height:7px;background:linear-gradient(#e8762e,#c9451a)"></div>
<svg class="a" style="left:254px;top:159px" width="26" height="26" viewBox="0 0 26 26"><defs><linearGradient id="inf" x1="0" y1="0" x2="0" y2="1"><stop offset="0" stop-color="#8fd6f5"/><stop offset="1" stop-color="#1f7fc4"/></linearGradient></defs>
<circle cx="13" cy="13" r="12.7" fill="url(#inf)"/>
<circle cx="13" cy="6.8" r="1.6" fill="#fff"/><path d="M11 10.5 H14.2 V19.6 H15.6 V21 H10.4 V19.6 H11.8 V11.8 H11 Z" fill="#fff"/></svg>
<svg class="a" style="left:293px;top:158px" width="19" height="28" viewBox="0 0 19 28"><path d="M3 7.2 C3 3.2 6 1.6 9.3 1.6 C13 1.6 16 3.6 16 7 C16 10.4 12.6 11.6 10.8 13.4 C9.8 14.4 9.6 15.6 9.6 18" stroke="#3d97cc" stroke-width="3.6" fill="none" stroke-linecap="round"/><circle cx="9.6" cy="23.6" r="2.5" fill="#3d97cc"/></svg>
<div class="a" style="left:70px;top:192px;width:261px;height:337px;border-top:1px solid #828790;border-left:1px solid #828790;border-right:1px solid #828790;border-bottom:1px solid #828790;background:#fff"></div>
<svg class="a" style="left:80px;top:198px" width="9" height="9" viewBox="0 0 9 9"><rect x=".5" y=".5" width="8" height="8" rx="1" fill="url(#exg)" stroke="#979797"/><rect x="2" y="4" width="5" height="1" fill="#3f4f86"/></svg>
<div class="a" style="left:90px;top:202px;width:5px;height:1px;background:repeating-linear-gradient(90deg,#a0a0a0 0 1px,transparent 1px 2px)"></div>
<div class="t" style="left:95px;top:197px;font-size:11px;color:#000;">COM3</div>
<div class="a" style="left:84px;top:207px;width:1px;height:43px;background:repeating-linear-gradient(#a0a0a0 0 1px,transparent 1px 2px)"></div>
<div class="a" style="left:103px;top:210px;width:1px;height:24px;background:repeating-linear-gradient(#a0a0a0 0 1px,transparent 1px 2px)"></div>
<div class="a" style="left:104px;top:218px;width:9px;height:1px;background:repeating-linear-gradient(90deg,#a0a0a0 0 1px,transparent 1px 2px)"></div>
<div class="a" style="left:113px;top:210px;width:78px;height:16px;background:#3399ff;outline:1px dotted #222;outline-offset:-1px"></div>
<div class="t" style="left:115px;top:213px;font-size:11px;color:#fff;">ПЧВ1, адрес:1</div>
<div class="a" style="left:104px;top:234px;width:9px;height:1px;background:repeating-linear-gradient(90deg,#a0a0a0 0 1px,transparent 1px 2px)"></div>
<div class="t" style="left:115px;top:229px;font-size:11px;color:#000;">ПЧВ1, адрес:2</div>
<svg class="a" style="left:80px;top:246px" width="9" height="9" viewBox="0 0 9 9"><rect x=".5" y=".5" width="8" height="8" rx="1" fill="url(#exg)" stroke="#979797"/><rect x="2" y="4" width="5" height="1" fill="#3f4f86"/></svg>
<div class="a" style="left:90px;top:250px;width:5px;height:1px;background:repeating-linear-gradient(90deg,#a0a0a0 0 1px,transparent 1px 2px)"></div>
<div class="t" style="left:95px;top:245px;font-size:11px;color:#000;">COM1</div>
<div class="a" style="left:103px;top:258px;width:1px;height:8px;background:repeating-linear-gradient(#a0a0a0 0 1px,transparent 1px 2px)"></div>
<div class="a" style="left:104px;top:266px;width:9px;height:1px;background:repeating-linear-gradient(90deg,#a0a0a0 0 1px,transparent 1px 2px)"></div>
<div class="t" style="left:115px;top:261px;font-size:11px;color:#000;">ПЧВ3, адрес:4</div>
</body></html>
